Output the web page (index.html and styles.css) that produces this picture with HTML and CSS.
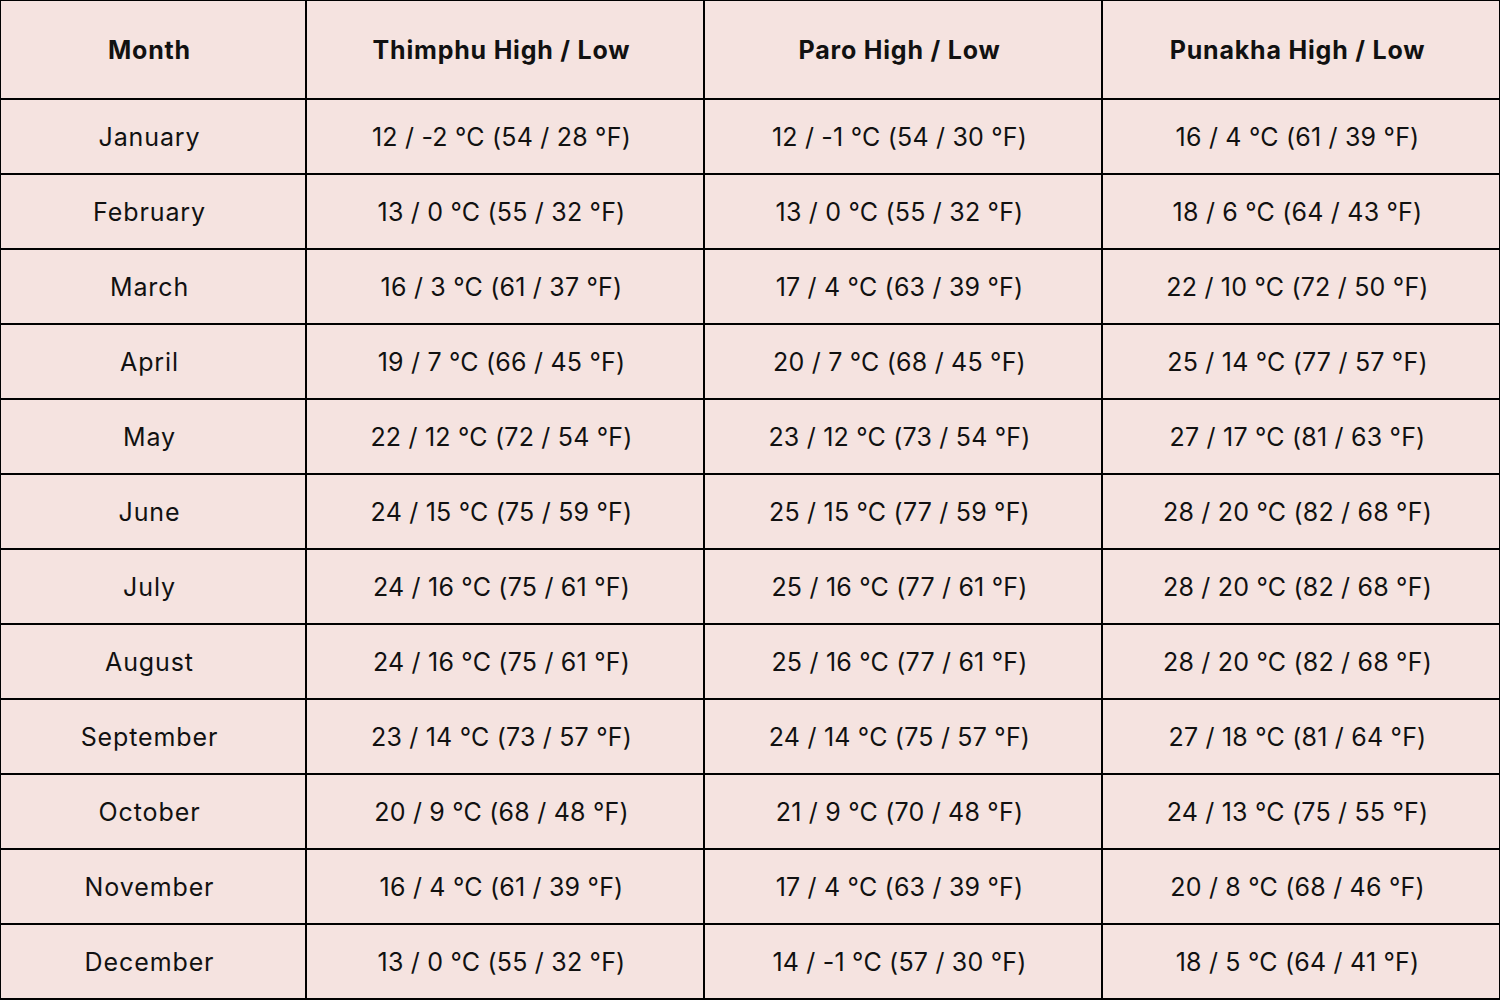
FILE: index.html
```html
<!DOCTYPE html>
<html lang="en">
<head>
<meta charset="utf-8">
<title>Bhutan Temperatures</title>
<link rel="stylesheet" href="styles.css">
</head>
<body>
<div class="table">
  <div class="cell head">Month</div>
  <div class="cell head">Thimphu High / Low</div>
  <div class="cell head">Paro High / Low</div>
  <div class="cell head">Punakha High / Low</div>

  <div class="cell month">January</div><div class="cell">12 / -2 °C (54 / 28 °F)</div><div class="cell">12 / -1 °C (54 / 30 °F)</div><div class="cell">16 / 4 °C (61 / 39 °F)</div>
  <div class="cell month">February</div><div class="cell">13 / 0 °C (55 / 32 °F)</div><div class="cell">13 / 0 °C (55 / 32 °F)</div><div class="cell">18 / 6 °C (64 / 43 °F)</div>
  <div class="cell month">March</div><div class="cell">16 / 3 °C (61 / 37 °F)</div><div class="cell">17 / 4 °C (63 / 39 °F)</div><div class="cell">22 / 10 °C (72 / 50 °F)</div>
  <div class="cell month">April</div><div class="cell">19 / 7 °C (66 / 45 °F)</div><div class="cell">20 / 7 °C (68 / 45 °F)</div><div class="cell">25 / 14 °C (77 / 57 °F)</div>
  <div class="cell month">May</div><div class="cell">22 / 12 °C (72 / 54 °F)</div><div class="cell">23 / 12 °C (73 / 54 °F)</div><div class="cell">27 / 17 °C (81 / 63 °F)</div>
  <div class="cell month">June</div><div class="cell">24 / 15 °C (75 / 59 °F)</div><div class="cell">25 / 15 °C (77 / 59 °F)</div><div class="cell">28 / 20 °C (82 / 68 °F)</div>
  <div class="cell month">July</div><div class="cell">24 / 16 °C (75 / 61 °F)</div><div class="cell">25 / 16 °C (77 / 61 °F)</div><div class="cell">28 / 20 °C (82 / 68 °F)</div>
  <div class="cell month">August</div><div class="cell">24 / 16 °C (75 / 61 °F)</div><div class="cell">25 / 16 °C (77 / 61 °F)</div><div class="cell">28 / 20 °C (82 / 68 °F)</div>
  <div class="cell month">September</div><div class="cell">23 / 14 °C (73 / 57 °F)</div><div class="cell">24 / 14 °C (75 / 57 °F)</div><div class="cell">27 / 18 °C (81 / 64 °F)</div>
  <div class="cell month">October</div><div class="cell">20 / 9 °C (68 / 48 °F)</div><div class="cell">21 / 9 °C (70 / 48 °F)</div><div class="cell">24 / 13 °C (75 / 55 °F)</div>
  <div class="cell month">November</div><div class="cell">16 / 4 °C (61 / 39 °F)</div><div class="cell">17 / 4 °C (63 / 39 °F)</div><div class="cell">20 / 8 °C (68 / 46 °F)</div>
  <div class="cell month">December</div><div class="cell">13 / 0 °C (55 / 32 °F)</div><div class="cell">14 / -1 °C (57 / 30 °F)</div><div class="cell">18 / 5 °C (64 / 41 °F)</div>
</div>
</body>
</html>
```
FILE: styles.css
```css
html, body {
  margin: 0;
  padding: 0;
  background: #f5e3e0;
}
.table {
  width: 1500px;
  height: 1000px;
  box-sizing: border-box;
  padding: 1px 1px 2px 1px;
  background: #000;
  display: grid;
  grid-template-columns: 304px 396px 396px 396px;
  grid-template-rows: 97px repeat(12, 73px);
  gap: 2px;
  font-family: Inter, "Liberation Sans", sans-serif;
  font-size: 25px;
  color: #111;
}
.cell {
  background: #f5e3e0;
  display: flex;
  align-items: center;
  justify-content: center;
  padding-right: 7px;
  letter-spacing: 0.2px;
}
.month {
  letter-spacing: 0.9px;
}
.head {
  font-weight: 700;
  letter-spacing: 0.8px;
}
```
